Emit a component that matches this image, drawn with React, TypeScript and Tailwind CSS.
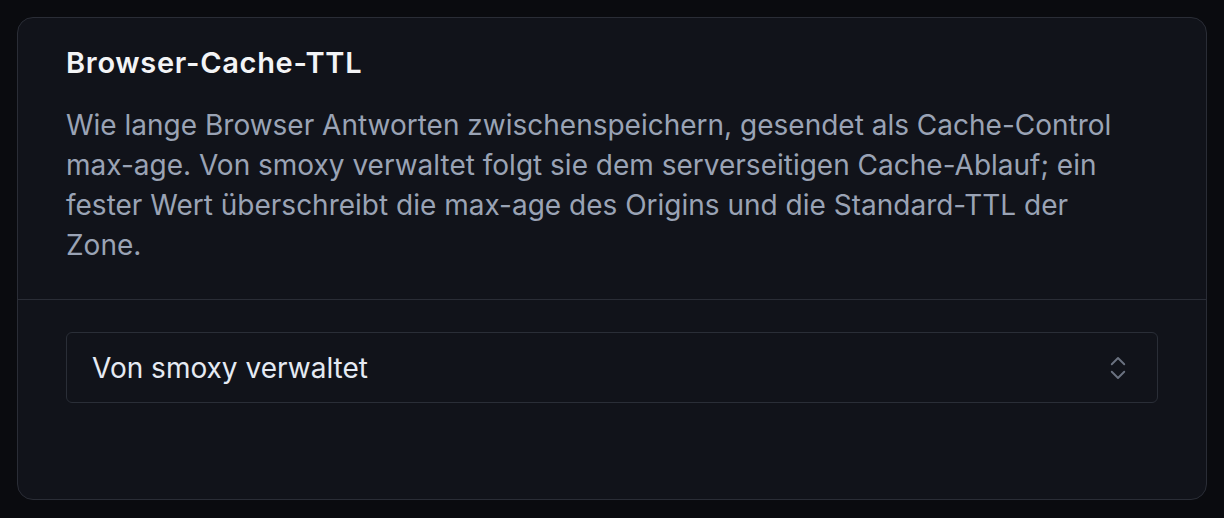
import { ChevronsUpDown } from 'lucide-react';

const sans = '"Inter", "Noto Sans", sans-serif';

export default function App() {
  return (
    <div className="min-h-screen bg-[#0a0b0f] p-[17px]" style={{ fontFamily: sans }}>
      <section className="rounded-2xl border border-[#2a2d36] bg-[#11131a]">
        <header className="border-b border-[#2a2d36] px-12 pt-[27px] pb-[34px]">
          <h2 className="text-[29px] leading-9 font-semibold tracking-[0.7px] text-[#f3f4f6]">
            Browser-Cache-TTL
          </h2>
          <p className="mt-6 max-w-[1062px] text-[28px] leading-10 text-[#9aa3b5]">
            Wie lange Browser Antworten zwischenspeichern, gesendet als Cache-Control
            max-age. Von smoxy verwaltet folgt sie dem serverseitigen Cache-Ablauf; ein
            fester Wert überschreibt die max-age des Origins und die Standard-TTL der
            Zone.
          </p>
        </header>
        <div className="px-12 pt-8 pb-24">
          <button
            type="button"
            className="flex h-[71px] w-full items-center justify-between rounded-md border border-[#2a2e37] bg-[#11131a] pl-[25px] pr-6 text-left"
          >
            <span className="text-[28px] text-[#e5eaf3]">Von smoxy verwaltet</span>
            <ChevronsUpDown className="h-[30px] w-[30px] text-[#6b7280]" strokeWidth={1.5} />
          </button>
        </div>
      </section>
    </div>
  );
}
